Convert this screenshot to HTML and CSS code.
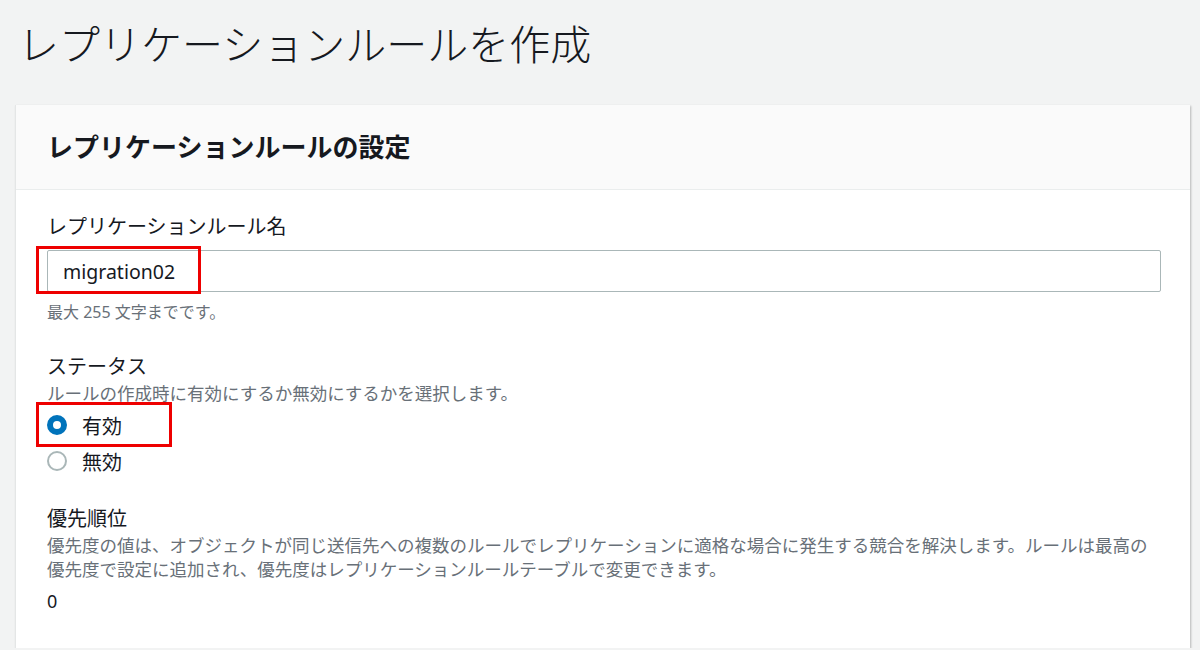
FILE: index.html
```html
<!DOCTYPE html>
<html lang="ja">
  <head>
    <meta charset="UTF-8" />
    <meta name="viewport" content="width=device-width, initial-scale=1.0" />
    <title>レプリケーションルールを作成</title>
    <link rel="stylesheet" href="styles.css">
  </head>
  <body>
    <h1 class="page-title">レプリケーションルールを作成</h1>

    <div class="card">
      <div class="card-header">
        <h2>レプリケーションルールの設定</h2>
      </div>

      <div class="card-body">
        <div class="field">
          <label class="field-label" for="ruleName">レプリケーションルール名</label>
          <div class="input-wrap">
            <input type="text" id="ruleName" value="migration02" />
            <span class="mark mark-input"></span>
          </div>
          <p class="field-hint">最大 255 文字までです。</p>
        </div>

        <div class="field field-status">
          <div class="field-label">ステータス</div>
          <p class="field-desc">ルールの作成時に有効にするか無効にするかを選択します。</p>
          <div class="radio-group">
            <label class="radio-row">
              <span class="radio checked"></span>
              <span>有効</span>
              <span class="mark mark-radio"></span>
            </label>
            <label class="radio-row">
              <span class="radio"></span>
              <span>無効</span>
            </label>
          </div>
        </div>

        <div class="field field-priority">
          <div class="field-label">優先順位</div>
          <p class="field-desc">優先度の値は、オブジェクトが同じ送信先への複数のルールでレプリケーションに適格な場合に発生する競合を解決します。ルールは最高の優先度で設定に追加され、優先度はレプリケーションルールテーブルで変更できます。</p>
          <div class="field-value">0</div>
        </div>
      </div>
    </div>
  </body>
</html>
```

FILE: styles.css
```css
body {
  font-family: "Noto Sans", "Noto Sans CJK JP", sans-serif;
  background-color: #f2f3f3;
  color: #16191f;
  margin: 0;
  padding: 0 10px 0 15px;
}

.page-title {
  font-size: 41px;
  font-weight: 300;
  line-height: 48px;
  margin: 20px 0 37px 3px;
}

.card {
  background-color: #fff;
  border-left: 1px solid #e4e6e6;
  box-shadow: 1px 1px 2px rgba(0, 0, 0, 0.25);
}

.card-header {
  background-color: #fafafa;
  border-bottom: 1px solid #eaeded;
  height: 84px;
  display: flex;
  align-items: center;
  padding: 0 31px;
}

.card-header h2 {
  margin: 0;
  font-size: 26px;
  font-weight: 700;
  line-height: 32px;
}

.card-body {
  padding: 23px 29px 33px 31px;
}

.field-label {
  display: block;
  font-size: 20px;
  line-height: 28px;
}

.input-wrap {
  position: relative;
  margin-top: 9px;
}

input[type='text'] {
  display: block;
  width: 100%;
  box-sizing: border-box;
  height: 42px;
  border: 1px solid #aab7b8;
  border-radius: 2px;
  padding: 0 15px;
  font-family: "Noto Sans", "Noto Sans CJK JP", sans-serif;
  font-size: 19.5px;
  color: #16191f;
  background: #fff;
}

/* red annotation boxes from the screenshot */
.mark {
  position: absolute;
  border: 3px solid #ee0000;
  pointer-events: none;
}

.mark-input {
  left: -11px;
  top: -4px;
  width: 159px;
  height: 42px;
}

.field-hint {
  margin: 9px 0 0;
  font-size: 16px;
  line-height: 22px;
  color: #687078;
}

.field-status {
  margin-top: 30px;
}

.field-desc {
  margin: 0;
  font-size: 17.5px;
  line-height: 24px;
  color: #687078;
}

.radio-group {
  margin-top: 2px;
}

.radio-row {
  position: relative;
  display: flex;
  align-items: center;
  gap: 15px;
  height: 36px;
  font-size: 20px;
}

.radio {
  width: 20px;
  height: 20px;
  box-sizing: border-box;
  border-radius: 50%;
  border: 2px solid #aab7b8;
  background: #fff;
}

.radio.checked {
  border: 6px solid #0073bb;
}

.mark-radio {
  left: -11px;
  top: -5px;
  width: 130px;
  height: 39px;
}

.field-priority {
  margin-top: 26px;
}

.field-value {
  margin-top: 6px;
  font-size: 18px;
  line-height: 28px;
}
```
